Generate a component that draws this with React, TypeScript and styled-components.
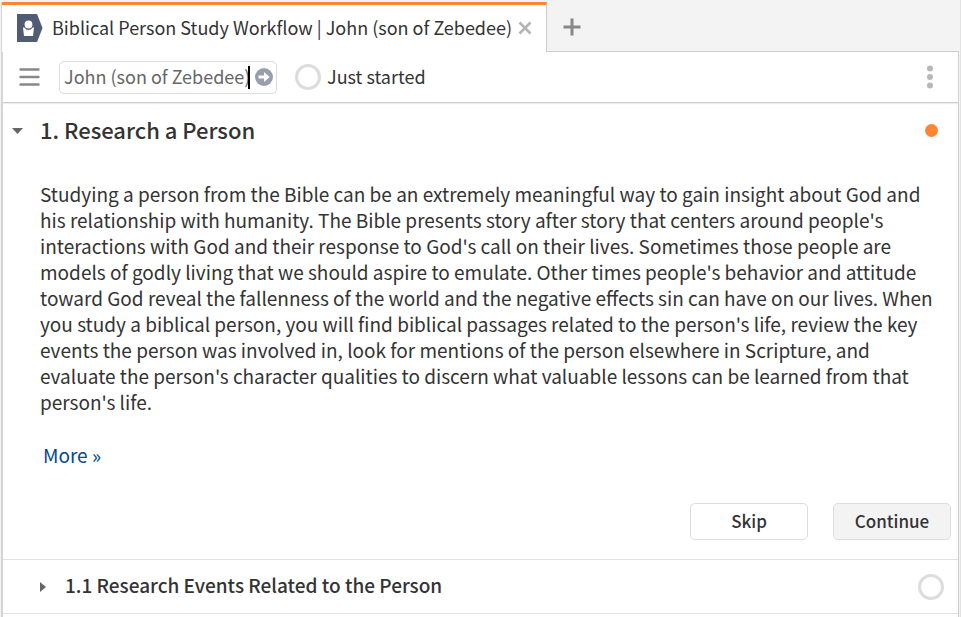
import React from "react";
import styled, { createGlobalStyle } from "styled-components";

const GlobalStyle = createGlobalStyle`
  *, *::before, *::after { box-sizing: border-box; }
  body {
    margin: 0;
    background: #f3f3f3;
    color: #333;
    font-family: "Noto Sans CJK SC", "Noto Sans", sans-serif;
    font-size: 18px;
    line-height: 26px;
  }
  button, input { font: inherit; color: inherit; }
  h1, h2, p { margin: 0; }
`;

const Shell = styled.div`
  display: flex;
  flex-direction: column;
  min-height: 100vh;
  padding: 2px 1px 0 1px;
  border-right: 1px solid #e2e2e2;
`;

const TabBar = styled.div`
  display: flex;
  height: 50px;
  border-left: 1px solid #d4d4d4;
`;

const Tab = styled.div`
  display: flex;
  align-items: center;
  min-width: 545px;
  height: 50px;
  padding: 0 14px 2px 15px;
  background: #fff;
  border-right: 1px solid #ccc;
  border-top: 3px solid #ff8533;
  svg { flex: none; }
`;

const TabTitle = styled.span`
  flex: 1;
  margin-left: 9px;
  padding-bottom: 2px;
  white-space: nowrap;
`;

const IconButton = styled.button`
  display: flex;
  align-items: center;
  justify-content: center;
  flex: none;
  padding: 0;
  border: 0;
  background: transparent;
`;

const TabRest = styled.div`
  display: flex;
  flex: 1;
  align-items: center;
  padding-left: 16px;
  border-bottom: 1px solid #ccc;
`;

const Panel = styled.main`
  flex: 1;
  background: #fff;
  border: solid #ccc;
  border-width: 0 1px 0 2px;
  border-left-color: #d4d4d4;
`;

const Toolbar = styled.div`
  display: flex;
  align-items: center;
  height: 51px;
  padding: 0 24px 0 16px;
  border-bottom: 1px solid #ccc;
  box-shadow: 0 1px 1px #eee;
`;

const PersonField = styled.div`
  display: flex;
  align-items: center;
  width: 218px;
  height: 33px;
  margin: 0 18px 0 19px;
  padding: 0 3px 0 4px;
  border: 1px solid #ddd;
  border-radius: 5px;
`;

const PersonInput = styled.input`
  flex: 1;
  min-width: 0;
  height: 28px;
  padding: 0 0 2px;
  border: 0;
  outline: 0;
  background: transparent;
  color: #666;
`;

const Caret = styled.span`
  width: 2px;
  height: 23px;
  margin: 0 5px 0 -2px;
  background: #000;
`;

const Ring = styled.span`
  flex: none;
  width: 26px;
  height: 26px;
  border: 3px solid #ddd;
  border-radius: 50%;
`;

const Status = styled.span`
  flex: 1;
  margin-left: 6px;
  padding-bottom: 2px;
`;

const SectionHeader = styled.header`
  display: flex;
  align-items: center;
  height: 55px;
  padding: 0 20px 0 7px;
`;

const SectionTitle = styled.h1`
  flex: 1;
  margin-left: 16px;
  padding-bottom: 4px;
  font-size: 22px;
  font-weight: 500;
`;

const Dot = styled.span`
  width: 13px;
  height: 13px;
  border-radius: 50%;
  background: #ff8533;
`;

const SectionBody = styled.div`
  padding: 23px 14px 0 37px;
  font-size: 19px;
`;

const More = styled.a`
  display: inline-block;
  margin: 27px 3px 0;
  color: #004a8f;
  text-decoration: none;
`;

const Actions = styled.div`
  display: flex;
  justify-content: flex-end;
  gap: 25px;
  padding: 35px 7px 19px;
`;

const ActionButton = styled.button<{ $primary?: boolean }>`
  width: 118px;
  height: 37px;
  padding: 0 0 2px;
  border: 1px solid #ddd;
  border-radius: 5px;
  background: ${(p) => (p.$primary ? "#f3f3f3" : "#fff")};
  font-size: 17px;
  font-weight: 500;
`;

const StepRow = styled.section`
  display: flex;
  align-items: center;
  height: 54px;
  padding: 0 14px 0 35px;
  border-top: 1px solid #e2e2e2;
`;

const StepTitle = styled.h2`
  flex: 1;
  margin-left: 17px;
  padding-bottom: 4px;
  font-size: 19px;
  font-weight: 500;
`;

const Rule = styled.div`
  border-top: 1px solid #e2e2e2;
`;

export default function App() {
  return (
    <>
      <GlobalStyle />
      <Shell>
        <TabBar>
          <Tab>
            <svg width="26" height="28" viewBox="0 0 26 28" aria-hidden="true">
              <path d="M0 0H20L25.5 14L20 28H0Z" fill="#505c73" />
              <circle cx="11.5" cy="10.5" r="3.9" fill="#fff" />
              <path d="M6 13.5H7.2Q11.5 18.5 15.8 13.5H17L16 22H7Z" fill="#fff" />
            </svg>
            <TabTitle>Biblical Person Study Workflow | John (son of Zebedee)</TabTitle>
            <IconButton aria-label="Close tab">
              <svg width="14" height="14" viewBox="0 0 14 14">
                <path d="M1.5 1.5L12.5 12.5M12.5 1.5L1.5 12.5" stroke="#b5b5b5" strokeWidth="2.7" />
              </svg>
            </IconButton>
          </Tab>
          <TabRest>
            <IconButton aria-label="New tab">
              <svg width="18" height="18" viewBox="0 0 18 18">
                <path d="M9 .5V17.5M.5 9H17.5" stroke="#888" strokeWidth="3" />
              </svg>
            </IconButton>
          </TabRest>
        </TabBar>
        <Panel>
          <Toolbar>
            <IconButton aria-label="Menu">
              <svg width="21" height="18" viewBox="0 0 21 18">
                <path d="M1.5 1.5H19.5M1.5 9H19.5M1.5 16.5H19.5" stroke="#888" strokeWidth="2.4" strokeLinecap="round" />
              </svg>
            </IconButton>
            <PersonField>
              <PersonInput aria-label="Person" defaultValue="John (son of Zebedee)" />
              <Caret />
              <IconButton aria-label="Go">
                <svg width="18" height="18" viewBox="0 0 18 18">
                  <circle cx="9" cy="9" r="9" fill="#989eac" />
                  <path d="M3.5 7.5H9V4L14.7 9L9 14V10.5H3.5Z" fill="#fff" />
                </svg>
              </IconButton>
            </PersonField>
            <Ring />
            <Status>Just started</Status>
            <IconButton aria-label="Panel menu">
              <svg width="8" height="24" viewBox="0 0 8 24" fill="#b8b8b8">
                <circle cx="4" cy="3.5" r="3" />
                <circle cx="4" cy="12" r="3" />
                <circle cx="4" cy="20.5" r="3" />
              </svg>
            </IconButton>
          </Toolbar>
          <SectionHeader>
            <IconButton aria-label="Collapse section">
              <svg width="14" height="8" viewBox="0 0 14 8">
                <path d="M2 1H13L7.5 7Z" fill="#666" />
              </svg>
            </IconButton>
            <SectionTitle>1. Research a Person</SectionTitle>
            <Dot />
          </SectionHeader>
          <SectionBody>
            <p>
              Studying a person from the Bible can be an extremely meaningful way to gain insight about God and his
              relationship with humanity. The Bible presents story after story that centers around people's
              interactions with God and their response to God's call on their lives. Sometimes those people are models
              of godly living that we should aspire to emulate. Other times people's behavior and attitude toward God
              reveal the fallenness of the world and the negative effects sin can have on our lives. When you study a
              biblical person, you will find biblical passages related to the person's life, review the key events the
              person was involved in, look for mentions of the person elsewhere in Scripture, and evaluate the
              person's character qualities to discern what valuable lessons can be learned from that person's life.
            </p>
            <More href="#more">More »</More>
          </SectionBody>
          <Actions>
            <ActionButton>Skip</ActionButton>
            <ActionButton $primary>Continue</ActionButton>
          </Actions>
          <StepRow>
            <IconButton aria-label="Expand step">
              <svg width="10" height="12" viewBox="0 0 10 12">
                <path d="M2 1V11L8 6Z" fill="#666" />
              </svg>
            </IconButton>
            <StepTitle>1.1 Research Events Related to the Person</StepTitle>
            <Ring />
          </StepRow>
          <Rule />
        </Panel>
      </Shell>
    </>
  );
}
